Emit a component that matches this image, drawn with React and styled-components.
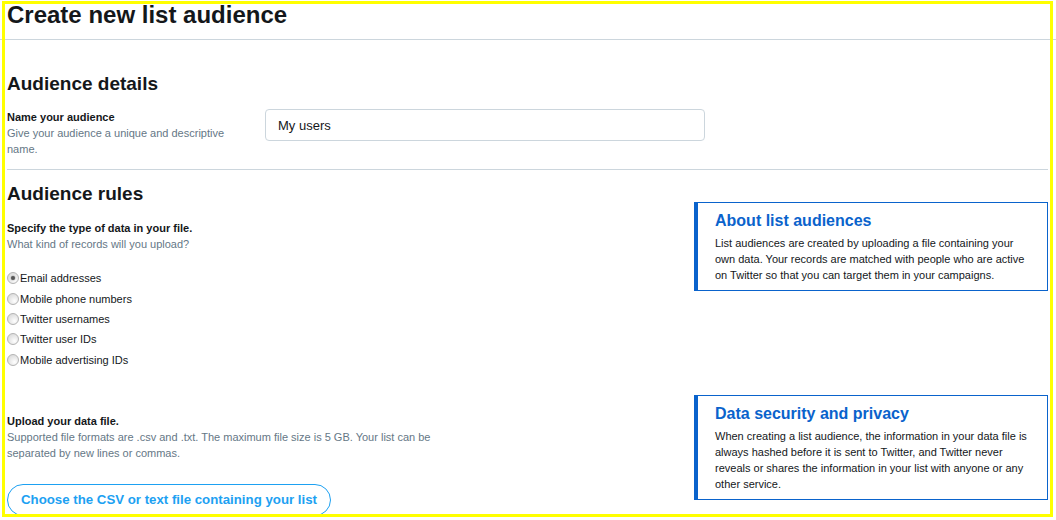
import React from "react";
import styled, { createGlobalStyle } from "styled-components";

const GlobalStyle = createGlobalStyle`
  html, body {
    margin: 0;
    padding: 0;
    background: #ffffff;
    overflow: hidden;
  }
  body {
    font-family: "Liberation Sans", Arial, sans-serif;
    color: #14171a;
  }
  * { box-sizing: border-box; }
`;

const Page = styled.div`
  position: relative;
  width: 1056px;
  height: 520px;
  overflow: hidden;
  background: #fff;
`;

const Header = styled.header`
  padding: 1px 7px 10px;
  border-bottom: 1px solid #ccd6dd;
`;

const Title = styled.h1`
  margin: 0;
  font-size: 24px;
  line-height: 28px;
  font-weight: 700;
  color: #14171a;
`;

const Content = styled.main`
  padding: 0 8px 0 7px;
`;

const DetailsSection = styled.section`
  padding: 32px 0 12px;
  border-bottom: 1px solid #ccd6dd;
`;

const SectionTitle = styled.h2`
  margin: 0 0 ${(p) => p.$gap || 0}px;
  font-size: 19px;
  line-height: 24px;
  font-weight: 700;
  color: #14171a;
`;

const FieldRow = styled.div`
  display: grid;
  grid-template-columns: 230px 440px;
  column-gap: 28px;
  align-items: start;
`;

const FieldText = styled.div`
  margin-top: ${(p) => p.$top || 0}px;
  max-width: ${(p) => p.$max || "none"};
`;

const Label = styled.div`
  font-size: 11px;
  line-height: 16px;
  font-weight: 700;
  color: #14171a;
`;

const Hint = styled.div`
  font-size: 11px;
  line-height: 16px;
  color: #657786;
`;

const TextInput = styled.input`
  width: 440px;
  height: 32px;
  padding: 0 12px;
  border: 1px solid #ccd6dd;
  border-radius: 4px;
  font-family: "Liberation Sans", Arial, sans-serif;
  font-size: 13px;
  color: #14171a;
  background: #fff;
  outline: none;
`;

const RulesSection = styled.section`
  display: grid;
  grid-template-columns: 1fr 354px;
  column-gap: 20px;
  padding-top: 12px;
`;

const MainColumn = styled.div`
  display: flex;
  flex-direction: column;
  align-items: flex-start;
`;

const RadioList = styled.div`
  margin-top: 16px;
  display: flex;
  flex-direction: column;
`;

const RadioRow = styled.label`
  display: flex;
  align-items: center;
  height: 20.4px;
  font-size: 11px;
  line-height: 16px;
  color: #14171a;
`;

const RadioInput = styled.input.attrs({ type: "radio" })`
  appearance: none;
  -webkit-appearance: none;
  margin: 0 1px 0 0;
  width: 12px;
  height: 12px;
  border-radius: 50%;
  border: 1px solid #b4b4b4;
  background: radial-gradient(circle at 65% 70%, #ffffff 0%, #ececec 40%, #d2d2d2 100%);
  position: relative;
  flex: none;
  &:checked::after {
    content: "";
    position: absolute;
    left: 3px;
    top: 3px;
    width: 4px;
    height: 4px;
    border-radius: 50%;
    background: #555;
    box-shadow: 0 0 1px 0.5px rgba(85, 85, 85, 0.4);
  }
`;

const UploadButton = styled.button`
  margin-top: 23px;
  height: 32px;
  padding: 0 13px;
  border: 1px solid #1da1f2;
  border-radius: 100px;
  background: #fff;
  color: #1da1f2;
  font-family: "Liberation Sans", Arial, sans-serif;
  font-size: 13.25px;
  font-weight: 700;
  cursor: pointer;
  white-space: nowrap;
`;

const Aside = styled.aside`
  padding-top: 20px;
  display: flex;
  flex-direction: column;
  gap: 104px;
`;

const InfoBox = styled.div`
  border: 1px solid #0a63cc;
  border-left: 4px solid #0a63cc;
  padding: 8px 14px 7px 17px;
  background: #fff;
`;

const InfoTitle = styled.h3`
  margin: 0 0 4px;
  font-size: 16px;
  line-height: 20px;
  font-weight: 700;
  color: #0a63cc;
`;

const InfoBody = styled.p`
  margin: 0;
  font-size: 11px;
  line-height: 16px;
  color: #14171a;
`;

const Frame = styled.div`
  position: absolute;
  left: 2px;
  top: 1px;
  width: 1051px;
  height: 516px;
  border: 3px solid #ffff00;
  pointer-events: none;
`;

const dataTypes = [
  "Email addresses",
  "Mobile phone numbers",
  "Twitter usernames",
  "Twitter user IDs",
  "Mobile advertising IDs",
];

export default function App() {
  return (
    <>
      <GlobalStyle />
      <Page>
        <Header>
          <Title>Create new list audience</Title>
        </Header>
        <Content>
          <DetailsSection>
            <SectionTitle $gap={13}>Audience details</SectionTitle>
            <FieldRow>
              <FieldText>
                <Label>Name your audience</Label>
                <Hint>Give your audience a unique and descriptive name.</Hint>
              </FieldText>
              <TextInput defaultValue="My users" />
            </FieldRow>
          </DetailsSection>
          <RulesSection>
            <MainColumn>
              <SectionTitle>Audience rules</SectionTitle>
              <FieldText $top={14}>
                <Label>Specify the type of data in your file.</Label>
                <Hint>What kind of records will you upload?</Hint>
              </FieldText>
              <RadioList>
                {dataTypes.map((t, i) => (
                  <RadioRow key={t}>
                    <RadioInput name="dataType" defaultChecked={i === 0} />
                    {t}
                  </RadioRow>
                ))}
              </RadioList>
              <FieldText $top={43} $max="440px">
                <Label>Upload your data file.</Label>
                <Hint>
                  Supported file formats are .csv and .txt. The maximum file size is 5 GB. Your list can be
                  separated by new lines or commas.
                </Hint>
              </FieldText>
              <UploadButton>Choose the CSV or text file containing your list</UploadButton>
            </MainColumn>
            <Aside>
              <InfoBox>
                <InfoTitle>About list audiences</InfoTitle>
                <InfoBody>
                  List audiences are created by uploading a file containing your own data. Your records are
                  matched with people who are active on Twitter so that you can target them in your campaigns.
                </InfoBody>
              </InfoBox>
              <InfoBox>
                <InfoTitle>Data security and privacy</InfoTitle>
                <InfoBody>
                  When creating a list audience, the information in your data file is always hashed before it is
                  sent to Twitter, and Twitter never reveals or shares the information in your list with anyone
                  or any other service.
                </InfoBody>
              </InfoBox>
            </Aside>
          </RulesSection>
        </Content>
        <Frame />
      </Page>
    </>
  );
}
